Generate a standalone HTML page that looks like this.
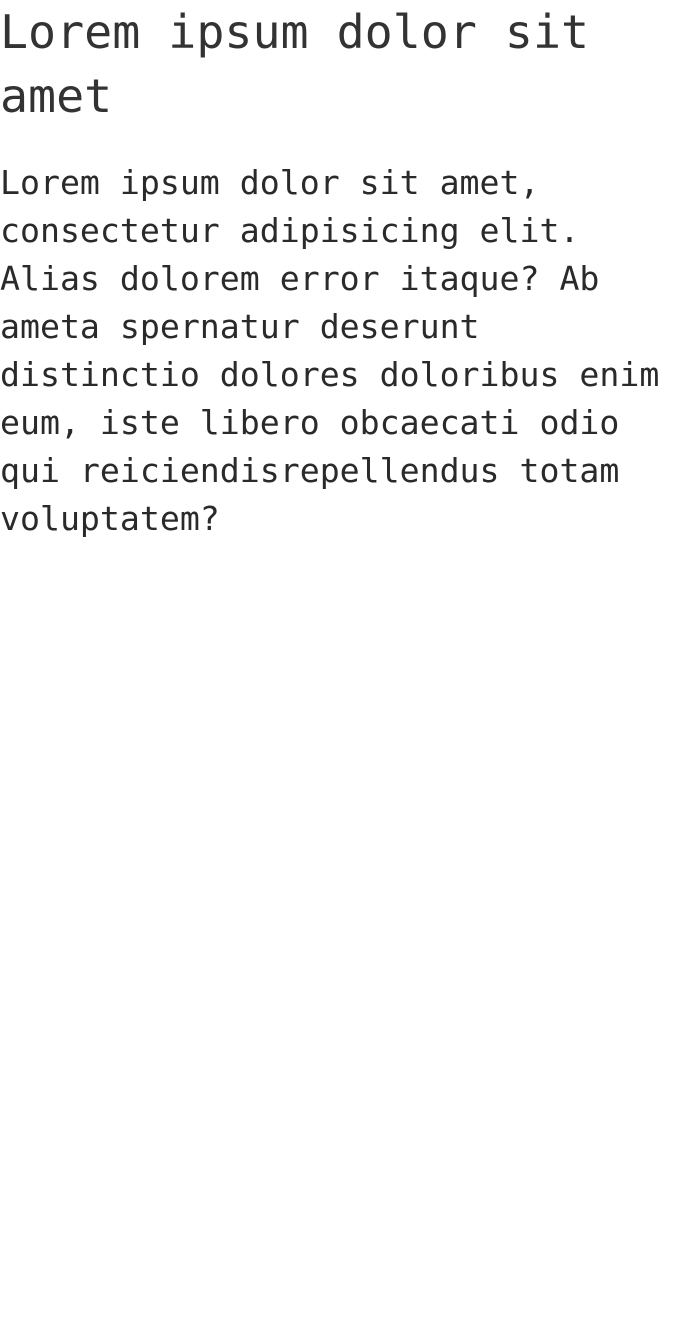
<!DOCTYPE html>
<html>
<head>
<meta charset="utf-8">
<style>
html,body{margin:0;padding:0;background:#fff;}
body{width:686px;height:1334px;overflow:hidden;color:#333;font-family:"DejaVu Sans Mono","Liberation Mono",monospace;}
h1{margin:0;font-weight:normal;font-size:46.6px;line-height:64px;white-space:nowrap;}
p{margin:31px 0 0;font-size:33.2px;line-height:48px;white-space:nowrap;color:#2a2a2a;}
</style>
</head>
<body>
<h1>Lorem ipsum dolor sit<br>amet</h1>
<p>Lorem ipsum dolor sit amet,<br>consectetur adipisicing elit.<br>Alias dolorem error itaque? Ab<br>ameta spernatur deserunt<br>distinctio dolores doloribus enim<br>eum, iste libero obcaecati odio<br>qui reiciendisrepellendus totam<br>voluptatem?</p>
</body>
</html>
